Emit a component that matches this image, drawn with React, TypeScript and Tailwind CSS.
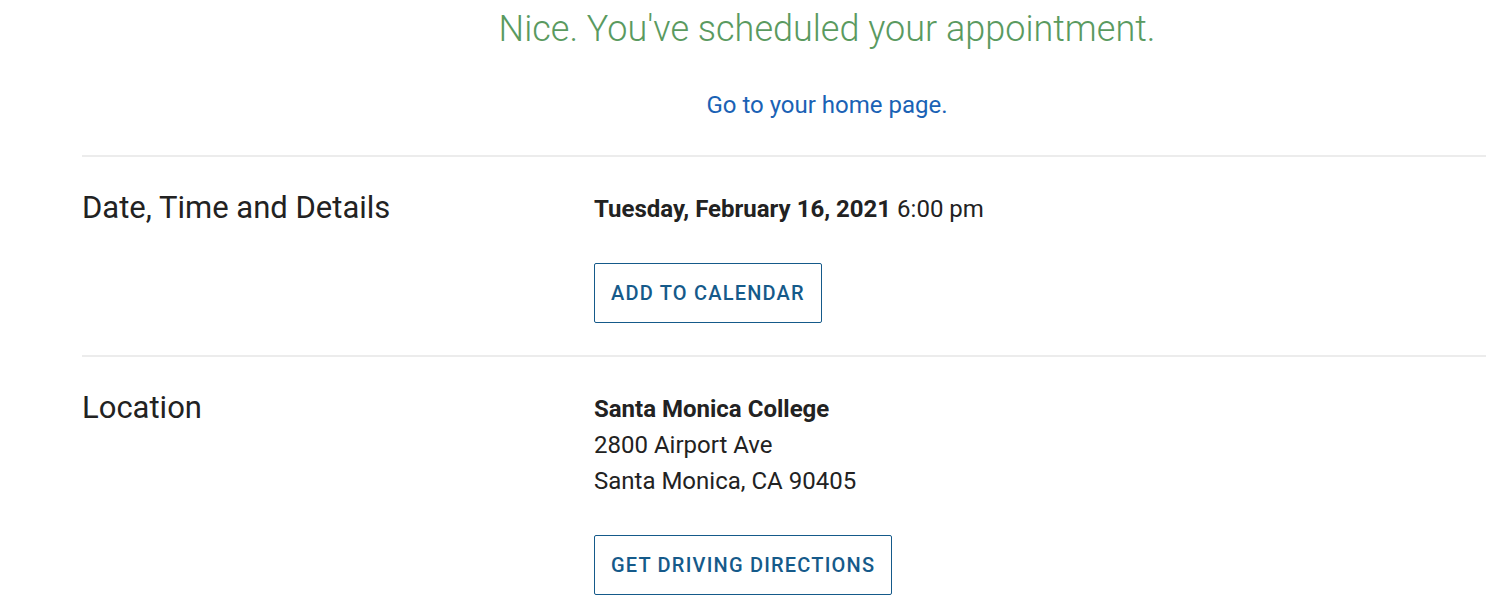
const font = { fontFamily: 'Roboto, "Liberation Sans", sans-serif' };

type Row = {
  label: string;
  content: React.ReactNode;
  action: string;
};

const rows: Row[] = [
  {
    label: 'Date, Time and Details',
    content: (
      <p className="leading-[36px]">
        <span className="font-bold">Tuesday, February 16, 2021</span> 6:00 pm
      </p>
    ),
    action: 'Add to Calendar',
  },
  {
    label: 'Location',
    content: (
      <div className="leading-[36px]">
        <p className="font-bold">Santa Monica College</p>
        <p>2800 Airport Ave</p>
        <p>Santa Monica, CA 90405</p>
      </div>
    ),
    action: 'Get Driving Directions',
  },
];

export default function App() {
  return (
    <div className="w-full h-[608px] overflow-hidden bg-white" style={font}>
      <div className="ml-[82px] w-[1490px]">
        {/* Confirmation header */}
        <div className="flex flex-col items-center">
          <h1 className="text-[36px] font-light text-[#5a9a5f] leading-[58px]">
            Nice. You've scheduled your appointment.
          </h1>
          <a href="#" className="mt-[29px] text-[24px] text-[#1a62b5] leading-[36px]">
            Go to your home page.
          </a>
        </div>

        {/* Detail rows */}
        {rows.map((row) => (
          <div key={row.label} className="flex mt-[32px] border-t-2 border-[#ececec]">
            <div className="w-[512px] pt-[29px] text-[31px] text-[#222] leading-[44px]">
              {row.label}
            </div>
            <div className="pt-[34px] text-[24px] text-[#222]">
              {row.content}
              <button className="mt-[36px] h-[60px] px-[16px] border border-[#155a8a] rounded-[2px] text-[20px] font-medium uppercase tracking-[0.06em] text-[#155a8a]">
                {row.action}
              </button>
            </div>
          </div>
        ))}
      </div>
    </div>
  );
}
